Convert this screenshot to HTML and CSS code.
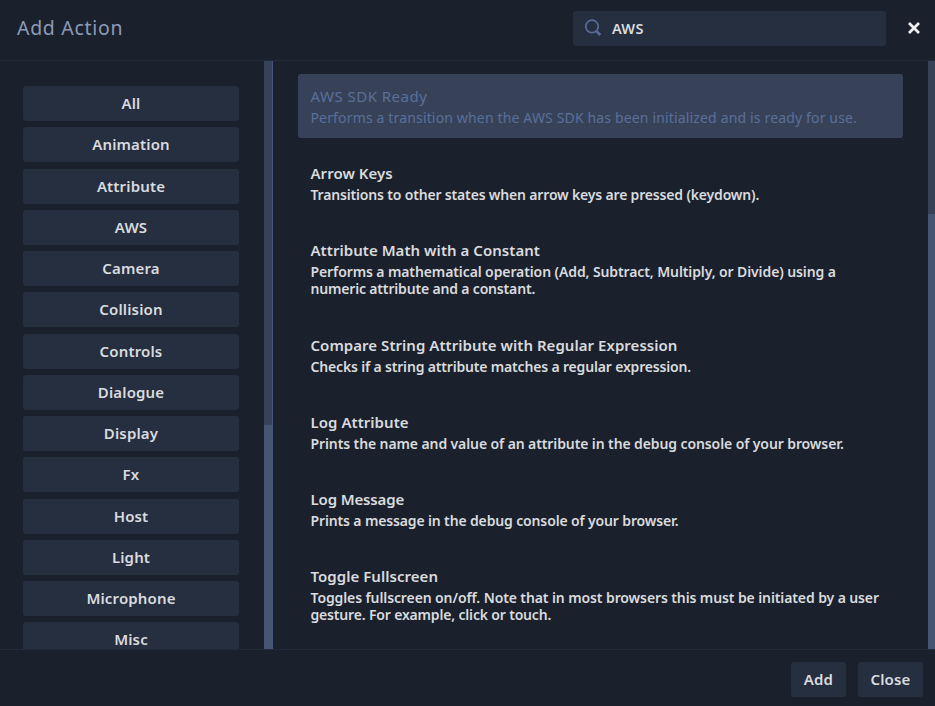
FILE: index.html
```
<!DOCTYPE html>
<html lang="en">
<head>
<meta charset="utf-8">
<title>Add Action</title>
<link rel="stylesheet" href="styles.css">
</head>
<body>
<div class="dialog">
  <header class="header">
    <h1 class="heading">Add Action</h1>
    <div class="search">
      <svg class="search-icon" width="18" height="18" viewBox="0 0 18 18" fill="none" stroke="currentColor"><circle cx="8" cy="7.4" r="6.2" stroke-width="1.7"/><path d="M12.2 11.8L16.4 16" stroke-width="2.6"/></svg>
      <span class="query">AWS</span>
    </div>
    <svg class="dismiss" width="12" height="12" viewBox="0 0 12 12" fill="none" stroke="currentColor" stroke-width="2.8"><path d="M1 1L11 11M11 1L1 11"/></svg>
  </header>
  <main class="body">
    <nav class="sidebar">
      <div class="categories">
        <button class="button">All</button>
        <button class="button">Animation</button>
        <button class="button">Attribute</button>
        <button class="button">AWS</button>
        <button class="button">Camera</button>
        <button class="button">Collision</button>
        <button class="button">Controls</button>
        <button class="button">Dialogue</button>
        <button class="button">Display</button>
        <button class="button">Fx</button>
        <button class="button">Host</button>
        <button class="button">Light</button>
        <button class="button">Microphone</button>
        <button class="button">Misc</button>
      </div>
      <div class="track track-left"><div class="thumb"></div></div>
    </nav>
    <section class="results">
      <div class="actions">
        <article class="action selected"><h2>AWS SDK Ready</h2><p>Performs a transition when the AWS SDK has been initialized and is ready for use.</p></article>
        <article class="action tight"><h2>Arrow Keys</h2><p>Transitions to other states when arrow keys are pressed (keydown).</p></article>
        <article class="action"><h2>Attribute Math with a Constant</h2><p>Performs a mathematical operation (Add, Subtract, Multiply, or Divide) using a<br><span class="tail">numeric attribute and a constant.</span></p></article>
        <article class="action tight"><h2>Compare String Attribute with Regular Expression</h2><p>Checks if a string attribute matches a regular expression.</p></article>
        <article class="action"><h2>Log Attribute</h2><p>Prints the name and value of an attribute in the debug console of your browser.</p></article>
        <article class="action message"><h2>Log Message</h2><p>Prints a message in the debug console of your browser.</p></article>
        <article class="action"><h2>Toggle Fullscreen</h2><p>Toggles fullscreen on/off. Note that in most browsers this must be initiated by a user<br><span class="tail">gesture. For example, click or touch.</span></p></article>
      </div>
      <div class="track track-right"><div class="thumb"></div></div>
    </section>
  </main>
  <footer class="footer">
    <button class="button add">Add</button>
    <button class="button close">Close</button>
  </footer>
</div>
</body>
</html>
```
FILE: styles.css
```
* { box-sizing: border-box; }
body {
  margin: 0;
  background: #1b212c;
  color: #d9dbdf;
  font-family: "Noto Sans", "Open Sans", sans-serif;
}
.dialog {
  display: grid;
  grid-template-rows: 61px 588px 57px;
  width: 935px;
  height: 706px;
  overflow: hidden;
}
.header {
  display: flex;
  align-items: center;
  padding: 0 15px 4px 17px;
  border-bottom: 1px solid #222b3a;
}
.heading {
  margin: 0 auto 0 0;
  font-size: 19.5px;
  font-weight: 400;
  line-height: 28px;
  letter-spacing: 0.7px;
  color: #8d9bb9;
}
.search {
  display: flex;
  align-items: center;
  width: 313px;
  height: 35px;
  margin-right: 22px;
  padding-left: 11px;
  gap: 10px;
  background: #262f3f;
  border-radius: 3px;
}
.search-icon { color: #576c98; }
.query { font-size: 14.5px; font-weight: 600; letter-spacing: 0.2px; }
.dismiss { color: #eeeeee; }
.body {
  display: grid;
  grid-template-columns: 273px 662px;
  min-height: 0;
}
.sidebar, .results {
  display: flex;
  min-width: 0;
  overflow: hidden;
}
.categories {
  display: flex;
  flex-direction: column;
  gap: 6.25px;
  width: 264px;
  padding: 25px 25px 0 23px;
}
.button {
  flex: none;
  height: 35px;
  padding: 0;
  border: 0;
  border-radius: 3px;
  background: #262f3f;
  color: #d9dbdf;
  font: 600 15px/35px "Noto Sans", "Open Sans", sans-serif;
  letter-spacing: 0.15px;
}
.track {
  display: flex;
  flex-direction: column;
  justify-content: flex-end;
  background: #374259;
}
.track-left { width: 9px; border-right: 1px solid #45557a; }
.track-right { width: 7px; }
.thumb { background: #455572; }
.track-left .thumb { height: 224px; }
.track-right .thumb { height: 435px; }
.actions {
  width: 655px;
  padding: 13px 25px 0;
}
.action {
  margin-bottom: 13.2px;
  padding: 12px 12.5px;
  border-radius: 3px;
}
.action h2 {
  margin: 0 0 3px;
  font-size: 15px;
  font-weight: 600;
  line-height: 20px;
  letter-spacing: 0.04px;
  white-space: nowrap;
}
.action p {
  margin: 0;
  font-size: 14px;
  font-weight: 600;
  line-height: 17px;
  letter-spacing: -0.105px;
  white-space: nowrap;
}
.action.tight p, .action .tail { letter-spacing: -0.17px; }
.action.message h2 { letter-spacing: -0.15px; }
.action.message p { letter-spacing: -0.14px; }
.action.selected { background: #374259; color: #5b6f9a; }
.action.selected h2 { font-weight: 400; letter-spacing: 0.48px; }
.action.selected p { font-weight: 400; letter-spacing: 0.155px; }
.footer {
  display: flex;
  justify-content: flex-end;
  gap: 12px;
  padding: 12px 12px 0 0;
  border-top: 1px solid #222b3a;
}
.add { width: 55px; }
.close { width: 65px; }
```
